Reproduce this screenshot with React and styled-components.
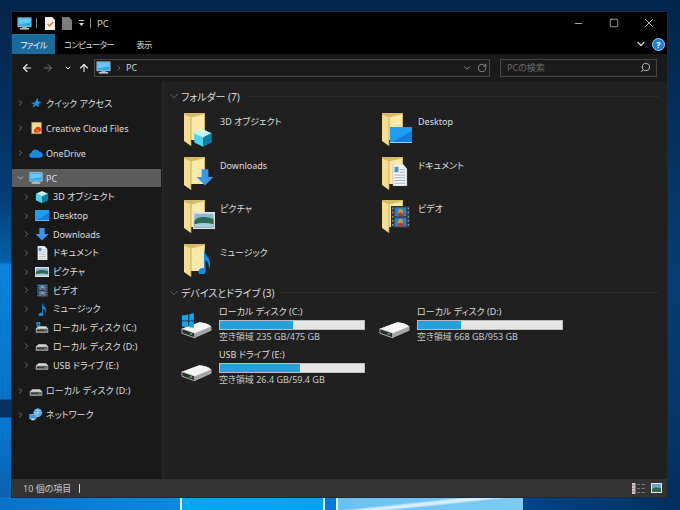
import React from 'react'
import styled, { createGlobalStyle } from 'styled-components'
import { ChevronRight, ChevronDown, ArrowLeft, ArrowRight, ArrowUp, RotateCw, Search, Minus, Square, X } from 'lucide-react'

const Global = createGlobalStyle`
  html, body { margin: 0; padding: 0; background: #03264e; }
  body {
    font-family: "Noto Sans", "Noto Sans CJK JP", sans-serif;
    font-feature-settings: "palt";
  }
  * { box-sizing: border-box; }
`

const Desktop = styled.div`
  width: 680px;
  height: 510px;
  overflow: hidden;
  padding: 12px 13px 13px 12px;
  background:
    linear-gradient(174deg, transparent 40%, #d8eefa 47%, #d8eefa 53%, transparent 60%) 338px 497px / 185px 13px no-repeat,
    linear-gradient(90deg,
      #0872c8 0, #0a8ae0 180px, #e0f2fb 180px, #e0f2fb 182px, #00a8f0 182px, #00a4ee 323px,
      #e0f2fb 323px, #e0f2fb 325px, #0a78d8 325px, #0a78d8 336px, #e0f2fb 336px, #e0f2fb 338px,
      #68c2f0 338px, #7ccbf2 523px, #04448a 523px, #033a72 600px, #03305e 680px) 0 497px / 100% 13px no-repeat,
    linear-gradient(180deg,
      #04254a 0, #04305f 115px, #043f78 200px, #0560a8 262px, #0a84dc 265px, #0772c4 399px,
      #07315f 400px, #07315f 417px, #0878d0 418px, #0a5ea8 510px) 0 0 / 12px 100% no-repeat,
    linear-gradient(180deg, #03244a 0, #063f72 280px, #03305e 510px) 100% 0 / 13px 100% no-repeat,
    #03264e;
`

const Win = styled.div`
  width: 655px;
  height: 485px;
  display: flex;
  flex-direction: column;
  background: #000;
  color: #e4e4e4;
  box-shadow: 0 0 0 1px #1b2c3f;
`

const TitleBar = styled.div`
  height: 22px;
  flex: none;
  display: flex;
  align-items: center;
  padding-left: 5px;
`

const QatItem = styled.span`
  display: flex;
  margin-left: ${p => p.$left}px;
`

const TitleSep = styled.span`
  width: 1px;
  height: 10px;
  background: #8a8a8a;
  margin-left: ${p => p.$left}px;
`

const TitleText = styled.span`
  font-size: 9.5px;
  color: #d4d4d4;
  margin-left: 6px;
`

const WinButtons = styled.div`
  margin-left: auto;
  display: flex;
  align-items: center;
  color: #f0f0f0;
`

const WinButton = styled.div`
  width: 35.5px;
  height: 22px;
  display: flex;
  align-items: center;
  justify-content: center;
`

const Ribbon = styled.div`
  height: 20px;
  flex: none;
  display: flex;
  align-items: stretch;
`

const Tab = styled.div`
  font-size: 8.5px;
  letter-spacing: -0.7px;
  display: flex;
  align-items: center;
  justify-content: center;
  width: ${p => p.$w}px;
  background: ${p => (p.$active ? '#1b6a9c' : 'transparent')};
  color: ${p => (p.$active ? '#f0f0f0' : '#d8d8d8')};
`

const RibbonRight = styled.div`
  margin-left: auto;
  display: flex;
  align-items: center;
  gap: 5px;
  padding-right: 2px;
  color: #d8d8d8;
`

const HelpBadge = styled.div`
  width: 13px;
  height: 13px;
  border-radius: 50%;
  background: #1a7fdc;
  border: 1px solid #9fcdf5;
  color: #fff;
  font-size: 9px;
  font-weight: 700;
  line-height: 11px;
  text-align: center;
`

const NavBar = styled.div`
  height: 28px;
  flex: none;
  background: #191919;
  display: flex;
  align-items: center;
  padding: 0 10px 1px 8px;
`

const NavBtn = styled.div`
  display: flex;
  align-items: center;
  justify-content: center;
  flex: none;
  width: ${p => p.$w}px;
  color: ${p => (p.$dim ? '#777' : '#f0f0f0')};
`

const AddressBox = styled.div`
  width: 396px;
  height: 18px;
  flex: none;
  border: 1px solid #474747;
  background: #1b1b1b;
  display: flex;
  align-items: center;
  padding: 0 2px 0 1px;
  font-size: 9px;
  color: #cfcfcf;
`

const Crumb = styled.span`
  margin-left: ${p => p.$left}px;
  color: ${p => p.$color || 'inherit'};
  display: flex;
  align-items: center;
`

const AddressEnd = styled.div`
  margin-left: auto;
  display: flex;
  align-items: center;
  gap: 5px;
  color: #a8a8a8;
`

const SearchBox = styled.div`
  width: 157px;
  height: 18px;
  flex: none;
  margin-left: 10px;
  border: 1px solid #474747;
  background: #1b1b1b;
  display: flex;
  align-items: center;
  justify-content: space-between;
  padding: 0 5px 0 6px;
  font-size: 9px;
  color: #6c6c6c;
`

const SearchGlass = styled(Search)`
  transform: scaleX(-1);
  color: #c4c4c4;
`

const Body = styled.div`
  flex: 1;
  min-height: 0;
  display: flex;
  background: #202020;
`

const Side = styled.nav`
  width: 151px;
  flex: none;
  background: #191919;
  padding: 12px 0 0;
  border-right: 1px solid #2a2a2a;
`

const Row = styled.div`
  height: ${p => (p.$child ? 18.7 : 18)}px;
  margin-bottom: ${p => p.$gap || 0}px;
  width: 149px;
  display: flex;
  align-items: center;
  padding-left: ${p => (p.$child ? 10 : 4)}px;
  background: ${p => (p.$selected ? '#5c5c5c' : 'transparent')};
  color: #dedede;
  font-size: 9px;
  white-space: nowrap;
`

const Twisty = styled.span`
  width: 9px;
  flex: none;
  display: flex;
  color: ${p => (p.$open ? '#cfcfcf' : '#8c8c8c')};
`

const RowIcon = styled.span`
  width: 14px;
  height: 14px;
  flex: none;
  margin: 0 ${p => (p.$child ? 4 : 3)}px 0 4px;
  display: flex;
  align-items: center;
  justify-content: center;
`

const Main = styled.main`
  flex: 1;
  min-width: 0;
  padding: 7px 0 0 4px;
`

const GroupHead = styled.div`
  display: flex;
  align-items: center;
  height: 14px;
  font-size: 10px;
  color: #dcdcdc;
  white-space: nowrap;
`

const HeadChevron = styled(ChevronDown)`
  color: #6e6e6e;
  flex: none;
`

const HeadLine = styled.span`
  flex: 1;
  height: 1px;
  background: #2b2b2b;
  margin: 0 8px 0 6px;
`

const Grid = styled.div`
  display: grid;
  grid-template-columns: 198px 198px;
  grid-auto-rows: ${p => p.$row}px;
  margin-top: ${p => p.$top}px;
  margin-bottom: ${p => p.$bottom || 0}px;
`

const Folder = styled.div`
  display: flex;
  align-items: flex-start;
  padding-left: 17px;
  font-size: 9px;
  color: #dedede;
  white-space: nowrap;
`

const FolderLabel = styled.span`
  margin-top: 2px;
`

const Drive = styled.div`
  display: flex;
  align-items: flex-start;
  padding-left: 14px;
  font-size: 9px;
  color: #dedede;
  white-space: nowrap;
`

const DriveInfo = styled.div`
  margin-left: 5px;
  width: 146px;
  flex: none;
  display: flex;
  flex-direction: column;
`

const DriveName = styled.div`
  height: 13px;
  line-height: 10px;
`

const Meter = styled.div`
  height: 10px;
  background: #e6e6e6;
  border: 1px solid #bcbcbc;
  display: flex;
`

const MeterFill = styled.div`
  background: #26a0da;
`

const DriveFree = styled.div`
  height: 14px;
  line-height: 14px;
  color: #c8c8c8;
`

const StatusBar = styled.div`
  height: 18px;
  flex: none;
  background: #333;
  display: flex;
  align-items: center;
  padding: 0 5px 0 11px;
  font-size: 9px;
  color: #c8c8c8;
`

const StatusSep = styled.span`
  width: 1px;
  height: 9px;
  background: #cfcfcf;
  margin-left: 8px;
`

const StatusIcons = styled.div`
  margin-left: auto;
  display: flex;
  align-items: center;
  gap: 6px;
`

const PcIcon = ({ s = 16 }) => (
  <svg width={s} height={s} viewBox="0 0 16 16">
    <rect x="1" y="2" width="14" height="9.5" fill="#2aa8ea" stroke="#d5e6f2" strokeWidth=".7" />
    <path d="M2 3h12v4L2 9z" fill="#63c8f4" />
    <rect x="5.500" y="11.500" width="5" height="1.500" fill="#9aa6ad" />
    <rect x="3" y="13" width="10" height="1.400" fill="#dfe4e7" />
  </svg>
)

const cubeArt = (
  <>
    <path d="M8 1l7 3.200L8 7.500 1 4.200z" fill="#c2f6f8" />
    <path d="M1 4.200L8 7.500V15l-7-3.400z" fill="#4bd6ea" />
    <path d="M15 4.200L8 7.500V15l7-3.400z" fill="#0e7fa8" />
  </>
)
const monitorArt = (
  <>
    <rect x="0" y="0" width="16" height="16" fill="#1f9df2" />
    <path d="M0 16L16 4v12z" fill="#0f80da" />
    <rect x="0" y="15.200" width="16" height=".8" fill="#bfe4fb" />
  </>
)
const downArt = <path d="M5 1h6v7h4.500L8 15.500.5 8H5z" fill="#3a96ea" />
const docArt = (
  <>
    <path d="M1 0h10l4 3.500V16H1z" fill="#f5f6f7" stroke="#888" strokeWidth=".3" />
    <path d="M2.500 2h4v4h-4z" fill="#4a95d8" />
    <path d="M8 4h5M8 6h5M2.500 8h10.500M2.500 10h10.500M2.500 12h10.500M2.500 14h10.500" stroke="#88949e" strokeWidth=".6" />
  </>
)
const picArt = (
  <>
    <rect x="0" y="0" width="16" height="16" fill="#eef0f1" stroke="#a0a0a0" strokeWidth=".3" />
    <rect x="1" y="1.500" width="14" height="13" fill="#8ab8d6" />
    <path d="M1 8c3-4 7-4 14-1.500V14.500H1z" fill="#2e6b50" />
    <path d="M1 11.500c4-1.500 9-1.500 14 0v3H1z" fill="#a9ccdc" />
  </>
)
const filmArt = (
  <>
    <rect x="0" y="0" width="16" height="16" fill="#2b3036" />
    <rect x="3" y="1" width="10" height="6.500" fill="#2d7fce" />
    <rect x="3" y="8.500" width="10" height="6.500" fill="#2d7fce" />
    <circle cx="8" cy="4" r="2" fill="#c99a2e" />
    <circle cx="8" cy="11.500" r="2" fill="#c99a2e" />
    <path d="M6 5.500l2-1 2 1v2H6zM6 13l2-1 2 1v2H6z" fill="#b33c2e" />
    <path d="M1.500 1v1.500M1.500 4v1.500M1.500 7v1.500M1.500 10v1.500M1.500 13v1.500M14.500 1v1.500M14.500 4v1.500M14.500 7v1.500M14.500 10v1.500M14.500 13v1.500" stroke="#aaa" strokeWidth="1" />
  </>
)
const noteArt = (
  <path d="M7.500 0c.5 3 2 4.300 4 6 2.300 2 2.300 5 .6 7.500.5-3-.5-5-3.100-6v6.500c0 2-2.200 2.800-4.400 2.500C2.300 16.200 1.500 14.500 3 13.200c1.200-1 3-1.200 4.500-.7z" fill="#0f8fe6" />
)

const Art = ({ s = 14, h, children }) => (
  <svg width={s} height={h || s} viewBox="0 0 16 16" preserveAspectRatio="none">{children}</svg>
)

const At = ({ x, y, w, h, children }) => (
  <svg x={x} y={y} width={w} height={h} viewBox="0 0 16 16" preserveAspectRatio="none">{children}</svg>
)

const FolderBase = ({ children }) => (
  <svg width="36" height="36" viewBox="0 0 36 36">
    <path d="M0 0h21v27H0z" fill="#d9b965" />
    <path d="M7 4.500L20 1.200V27H7z" fill="#fbe8ac" />
    <path d="M0 1.500l7 3V33l-7-5z" fill="#f6dd8f" />
    <path d="M7 4.500V33" stroke="#b5954c" strokeWidth=".7" />
    {children}
  </svg>
)

const folders = [
  { name: '3D オブジェクト', art: cubeArt, x: 9, y: 15, w: 20, h: 20, nav: <Art h={14}>{cubeArt}</Art> },
  { name: 'Desktop', art: monitorArt, x: 8, y: 14, w: 22, h: 16, nav: <Art h={11}>{monitorArt}</Art> },
  { name: 'Downloads', art: downArt, x: 12, y: 11, w: 18, h: 18, nav: <Art>{downArt}</Art> },
  { name: 'ドキュメント', art: docArt, x: 10, y: 7, w: 16, h: 22, nav: <Art s={11} h={14}>{docArt}</Art> },
  { name: 'ピクチャ', art: picArt, x: 9, y: 12, w: 22, h: 17, nav: <Art h={10}>{picArt}</Art> },
  { name: 'ビデオ', art: filmArt, x: 9, y: 6, w: 19, h: 22, nav: <Art s={11} h={13}>{filmArt}</Art> },
  { name: 'ミュージック', art: noteArt, x: 12, y: 4, w: 17, h: 26, nav: <Art s={11} h={14}>{noteArt}</Art> },
]

const StarIcon = () => (
  <svg width="12" height="12" viewBox="0 0 16 16">
    <path d="M10 1l1 4.500 4 1.500-3.600 2.400.4 4.600L8.300 11l-4.800 3.500 1.600-4.700L1 7.600l5.400-.4z" fill="#1890e8" />
  </svg>
)

const CcIcon = () => (
  <svg width="13" height="14" viewBox="0 0 16 16">
    <path d="M2 1h12v14H2z" fill="#f6d98b" stroke="#b7964a" strokeWidth=".5" />
    <circle cx="10" cy="10" r="3.400" fill="#dd3b22" />
    <circle cx="7" cy="11.300" r="2.400" fill="#dd3b22" />
    <path d="M7 11.300h4" stroke="#f6d98b" strokeWidth=".8" />
  </svg>
)

const CloudIcon = () => (
  <svg width="14" height="14" viewBox="0 0 16 16">
    <path d="M3.400 13.500C1.500 13.500.3 12.200.3 10.700s1-2.600 2.500-2.800C3.300 5.400 5.300 4 7.500 4c1.800 0 3.300.9 4.100 2.500 2.300-.1 4.100 1.500 4.100 3.600s-1.500 3.400-3.400 3.400z" fill="#1a8ae0" />
  </svg>
)

const NetworkIcon = () => (
  <svg width="15" height="15" viewBox="0 0 16 16">
    <circle cx="10" cy="6" r="5" fill="#4aa6e8" />
    <path d="M7 2.500c2 1 5 1 7 0M5.500 6h9M10 1v10" stroke="#d5ecfb" strokeWidth=".6" fill="none" />
    <rect x="1" y="8" width="7" height="5" fill="#2a9be8" stroke="#cfe4f3" strokeWidth=".6" />
    <rect x="2.500" y="13" width="4" height="1.600" fill="#d0d6da" />
  </svg>
)

const SmallDrive = ({ win }) => (
  <svg width="14" height="14" viewBox="0 0 32 32">
    <path d="M2 17l6-5h17l5 5v9H2z" fill="#d8d8d8" />
    <path d="M2 17h28v9H2z" fill="#a9a9a9" />
    <rect x="4" y="19" width="24" height="5" fill="#3a3a3a" />
    <rect x="22" y="20.500" width="4" height="2" fill="#35d05a" />
    {win && <path d="M3 3l4-.6V7H3zM8 2.300L12 2v5H8zM3 8h4v4.500l-4-.6zM8 8h4v5l-4-.6z" fill="#18a8f0" />}
  </svg>
)

const BigDrive = ({ win }) => (
  <svg width="36" height="36" viewBox="0 0 36 36">
    <path d="M1 22L20 15c5 .5 10 2 13 4.500v4.500L15 32 1 27z" fill="#d0d0d0" />
    <path d="M1 22l14 5 18-7.500C30 17 25 15.500 20 15z" fill="#f4f4f4" />
    <path d="M1 22l14 5v5L1 27z" fill="#2d2d2d" stroke="#d0d0d0" strokeWidth=".8" />
    <path d="M15 27l18-7.500V24L15 32z" fill="#a5a5a5" />
    <rect x="9.500" y="27" width="2.500" height="1.500" fill="#35d05a" />
    {win && <path d="M1 7.500l7-1V13H1zM9 6.300L14 5v8H9zM1 14h7v6.500l-7-1zM9 14h5v7l-5-.6z" fill="#10a6f0" />}
  </svg>
)

const drives = [
  { name: 'ローカル ディスク (C:)', free: '空き領域 235 GB/475 GB', pct: 50.5, win: true },
  { name: 'ローカル ディスク (D:)', free: '空き領域 668 GB/953 GB', pct: 30 },
  { name: 'USB ドライブ (E:)', free: '空き領域 26.4 GB/59.4 GB', pct: 55.5 },
]

const QatDoc = () => (
  <svg width="10" height="13" viewBox="0 0 10 13">
    <path d="M0 0h7l3 3v10H0z" fill="#f4f0e6" />
    <path d="M2.500 7l2 2 3.500-4" stroke="#e06a2c" strokeWidth="1.200" fill="none" />
  </svg>
)

const QatBlank = () => (
  <svg width="10" height="13" viewBox="0 0 10 13">
    <path d="M0 0h7l3 3v10H0z" fill="#7c7c7c" />
  </svg>
)

const QatMenu = () => (
  <svg width="7" height="8" viewBox="0 0 7 8">
    <path d="M1 1.500h5" stroke="#ddd" />
    <path d="M1 4h5L3.500 7z" fill="#ddd" />
  </svg>
)

const DetailsIcon = () => (
  <svg width="13" height="11" viewBox="0 0 13 11">
    <rect x="0" y="0" width="3.500" height="11" fill="#c8c8c8" />
    <path d="M0 2.500h3.500M0 5.500h3.500M0 8.500h3.500" stroke="#c94040" strokeWidth=".5" />
    <path d="M5 1.500h3M9.500 1.500H13M5 5.500h3M9.500 5.500H13M5 9.500h3M9.500 9.500H13" stroke="#777" />
  </svg>
)

const ThumbIcon = () => (
  <svg width="11" height="10" viewBox="0 0 11 10">
    <rect x="0" y="0" width="11" height="10" fill="#e8e8e8" />
    <rect x="1" y="1" width="9" height="8" fill="#6aa2c6" />
    <path d="M1 6c3-2 6-2 9-.5V9H1z" fill="#2f6a4e" />
  </svg>
)

const SideRow = ({ icon, label, child, selected, open, gap }) => (
  <Row $child={child} $selected={selected} $gap={gap}>
    <Twisty $open={open}>
      {open ? <ChevronDown size={10} strokeWidth={2.2} /> : <ChevronRight size={10} strokeWidth={2} />}
    </Twisty>
    <RowIcon $child={child}>{icon}</RowIcon>
    {label}
  </Row>
)

const App = () => {
  return (
    <Desktop>
      <Global />
      <Win>
        <TitleBar>
          <PcIcon s={15} />
          <TitleSep $left={4} />
          <QatItem $left={8}><QatDoc /></QatItem>
          <QatItem $left={7}><QatBlank /></QatItem>
          <QatItem $left={6}><QatMenu /></QatItem>
          <TitleSep $left={5} />
          <TitleText>PC</TitleText>
          <WinButtons>
            <WinButton><Minus size={11} strokeWidth={1.5} /></WinButton>
            <WinButton><Square size={10} strokeWidth={1.5} /></WinButton>
            <WinButton><X size={14} strokeWidth={1.3} /></WinButton>
          </WinButtons>
        </TitleBar>
        <Ribbon>
          <Tab $active $w={43}>ファイル</Tab>
          <Tab $w={68}>コンピューター</Tab>
          <Tab $w={42}>表示</Tab>
          <RibbonRight>
            <ChevronDown size={12} strokeWidth={2.4} />
            <HelpBadge>?</HelpBadge>
          </RibbonRight>
        </Ribbon>
        <NavBar>
          <NavBtn $w={13}><ArrowLeft size={12} strokeWidth={2.2} /></NavBtn>
          <NavBtn $w={30} $dim><ArrowRight size={12} strokeWidth={2} /></NavBtn>
          <NavBtn $w={10}><ChevronDown size={8} strokeWidth={3} /></NavBtn>
          <NavBtn $w={21}><ArrowUp size={12} strokeWidth={2.2} /></NavBtn>
          <AddressBox>
            <PcIcon s={15} />
            <Crumb $left={4} $color="#888"><ChevronRight size={8} /></Crumb>
            <Crumb $left={3}>PC</Crumb>
            <AddressEnd>
              <ChevronDown size={10} strokeWidth={2} />
              <RotateCw size={10} strokeWidth={1.8} />
            </AddressEnd>
          </AddressBox>
          <SearchBox>
            PCの検索
            <SearchGlass size={11} />
          </SearchBox>
        </NavBar>
        <Body>
          <Side>
            <SideRow icon={<StarIcon />} label="クイック アクセス" gap={7} />
            <SideRow icon={<CcIcon />} label="Creative Cloud Files" gap={7} />
            <SideRow icon={<CloudIcon />} label="OneDrive" gap={7} />
            <SideRow icon={<PcIcon s={16} />} label="PC" selected open gap={0.5} />
            {folders.map(f => (
              <SideRow key={f.name} child icon={f.nav} label={f.name} />
            ))}
            <SideRow child icon={<SmallDrive win />} label="ローカル ディスク (C:)" />
            <SideRow child icon={<SmallDrive />} label="ローカル ディスク (D:)" />
            <SideRow child icon={<SmallDrive />} label="USB ドライブ (E:)" gap={7.5} />
            <SideRow icon={<SmallDrive />} label="ローカル ディスク (D:)" gap={6} />
            <SideRow icon={<NetworkIcon />} label="ネットワーク" />
          </Side>
          <Main>
            <GroupHead>
              <HeadChevron size={14} strokeWidth={1.5} />
              フォルダー (7)
              <HeadLine />
            </GroupHead>
            <Grid $row={43.7} $top={10} $bottom={-2}>
              {folders.map(f => (
                <Folder key={f.name}>
                  <FolderBase>
                    <At x={f.x} y={f.y} w={f.w} h={f.h}>{f.art}</At>
                  </FolderBase>
                  <FolderLabel>{f.name}</FolderLabel>
                </Folder>
              ))}
            </Grid>
            <GroupHead>
              <HeadChevron size={14} strokeWidth={1.5} />
              デバイスとドライブ (3)
              <HeadLine />
            </GroupHead>
            <Grid $row={43.7} $top={7}>
              {drives.map(d => (
                <Drive key={d.name}>
                  <BigDrive win={d.win} />
                  <DriveInfo>
                    <DriveName>{d.name}</DriveName>
                    <Meter><MeterFill style={{ width: `${d.pct}%` }} /></Meter>
                    <DriveFree>{d.free}</DriveFree>
                  </DriveInfo>
                </Drive>
              ))}
            </Grid>
          </Main>
        </Body>
        <StatusBar>
          10 個の項目
          <StatusSep />
          <StatusIcons>
            <DetailsIcon />
            <ThumbIcon />
          </StatusIcons>
        </StatusBar>
      </Win>
    </Desktop>
  )
}

export default App
